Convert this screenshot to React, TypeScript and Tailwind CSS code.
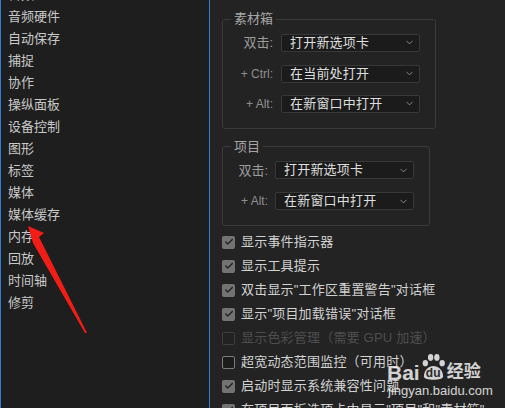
import { Check, ChevronDown } from 'lucide-react';

const navItems = [
  '音频',
  '音频硬件',
  '自动保存',
  '捕捉',
  '协作',
  '操纵面板',
  '设备控制',
  '图形',
  '标签',
  '媒体',
  '媒体缓存',
  '内存',
  '回放',
  '时间轴',
  '修剪',
];

type Opt = { label: string; checked: boolean; disabled?: boolean };

const options: Opt[] = [
  { label: '显示事件指示器', checked: true },
  { label: '显示工具提示', checked: true },
  { label: '双击显示"工作区重置警告"对话框', checked: true },
  { label: '显示"项目加载错误"对话框', checked: true },
  { label: '显示色彩管理（需要 GPU 加速）', checked: false, disabled: true },
  { label: '超宽动态范围监控（可用时）', checked: false },
  { label: '启动时显示系统兼容性问题', checked: true },
  { label: '在项目面板选项卡中显示"项目"和"素材箱"', checked: true },
];

function Select({ value }: { value: string }) {
  return (
    <div className="flex h-[18px] w-[139px] items-center justify-between rounded-[2px] border border-[#383838] bg-[#1b1b1b] pl-[8px] pr-[4px]">
      <span className="text-[13px] leading-[16px] tracking-[0.2px] text-[#dedede]">{value}</span>
      <ChevronDown size={11} strokeWidth={1.5} className="text-[#b4b4b4]" />
    </div>
  );
}

function Row({ label, value, small, labelW }: { label: string; value: string; small?: boolean; labelW: string }) {
  return (
    <div className="flex items-center">
      <span
        className={`${labelW} shrink-0 text-right ${
          small ? 'text-[12px] text-[#8e8e8e]' : 'text-[13px] text-[#9c9c9c]'
        }`}
      >
        {label}
      </span>
      <Select value={value} />
    </div>
  );
}

function CheckRow({ opt }: { opt: Opt }) {
  return (
    <div className="flex h-[24px] items-center gap-[6px]">
      {opt.checked ? (
        <span className="flex h-[13px] w-[13px] items-center justify-center rounded-[2px] bg-[#737373]">
          <Check size={10} strokeWidth={3.5} className="text-[#262626]" />
        </span>
      ) : (
        <span
          className={`h-[13px] w-[13px] rounded-[2px] border ${
            opt.disabled ? 'border-[#3e3e3e] bg-[#222]' : 'border-[#7c7c7c] bg-[#1c1c1c]'
          }`}
        />
      )}
      <span
        className={`whitespace-nowrap text-[13px] tracking-[0.2px] ${
          opt.disabled ? 'text-[#4e4e4e]' : 'text-[#d2d2d2]'
        }`}
      >
        {opt.label}
      </span>
    </div>
  );
}

// baidu jingyan watermark over the bottom right corner
function Watermark() {
  return (
    <div className="pointer-events-none absolute left-[387px] top-[353px] text-white/80">
      <div className="flex items-end">
        <span className="text-[21px] font-bold leading-[17px]">Bai</span>
        <div className="relative mx-[1px] flex h-[28px] w-[25px] flex-col items-center justify-end">
          <svg width="25" height="28" viewBox="0 0 26 28" className="absolute left-0 top-0">
            <ellipse cx="4.5" cy="10" rx="2.8" ry="3.2" fill="currentColor" />
            <ellipse cx="10" cy="4" rx="2.8" ry="3.5" fill="currentColor" />
            <ellipse cx="16.5" cy="4" rx="2.8" ry="3.5" fill="currentColor" />
            <ellipse cx="22" cy="10" rx="2.8" ry="3.2" fill="currentColor" />
            <path d="M3 24 C3 17 8.5 13 13 13 C17.5 13 23 17 23 24 C23 28.5 3 28.5 3 24 Z" fill="currentColor" />
          </svg>
          <span className="relative mb-[2px] text-[12px] font-bold leading-[12px] text-[#2a2a2a]">du</span>
        </div>
        <span className="text-[17px] font-bold leading-[18px]">经验</span>
      </div>
      <div className="mt-[3px] pl-[1px] text-[13px] leading-[14px]">jingyan.baidu.com</div>
    </div>
  );
}

export default function App() {
  return (
    <div className="relative flex h-[408px] w-[505px] overflow-hidden bg-[#232323] font-['Liberation_Sans','Noto_Sans_CJK_SC',sans-serif]">
      <div className="w-[210px] shrink-0 border-l border-r border-l-[#2f7fd8] border-r-[#2f7fd8] bg-[#1e1e1e]">
        <ul className="mt-[-16px] pl-[7px]">
          {navItems.map((item) => (
            <li key={item} className="h-[22px] text-[13px] leading-[22px] text-[#c9c9c9]">
              {item}
            </li>
          ))}
        </ul>
      </div>

      <div className="flex-1 pl-[12px] pt-[10px]">
        <fieldset className="w-[214px] rounded-[3px] border border-[#3a3a3a] pb-[15px] pt-[5px]">
          <legend className="ml-[8px] px-[3px] text-[13px] leading-[18px] text-[#a6a6a6]">素材箱</legend>
          <div className="flex flex-col gap-[12px]">
            <Row label="双击:" value="打开新选项卡" labelW="w-[58px] pr-[8px]" />
            <Row label="+ Ctrl:" value="在当前处打开" small labelW="w-[58px] pr-[8px]" />
            <Row label="+ Alt:" value="在新窗口中打开" small labelW="w-[58px] pr-[8px]" />
          </div>
        </fieldset>

        <fieldset className="mt-[9px] w-[208px] rounded-[3px] border border-[#3a3a3a] pb-[15px] pt-[5px]">
          <legend className="ml-[8px] px-[3px] text-[13px] leading-[18px] text-[#a6a6a6]">项目</legend>
          <div className="flex flex-col gap-[12px]">
            <Row label="双击:" value="打开新选项卡" labelW="w-[52px] pr-[7px]" />
            <Row label="+ Alt:" value="在新窗口中打开" small labelW="w-[52px] pr-[7px]" />
          </div>
        </fieldset>

        <div className="mt-[4px] flex flex-col">
          {options.map((o) => (
            <CheckRow key={o.label} opt={o} />
          ))}
        </div>
      </div>

      <svg className="pointer-events-none absolute left-0 top-0" width="505" height="408">
        <polygon points="28,226 44,233 39,237 87,333 85,333 33,243" fill="#f21d16" />
      </svg>

      <Watermark />
    </div>
  );
}
